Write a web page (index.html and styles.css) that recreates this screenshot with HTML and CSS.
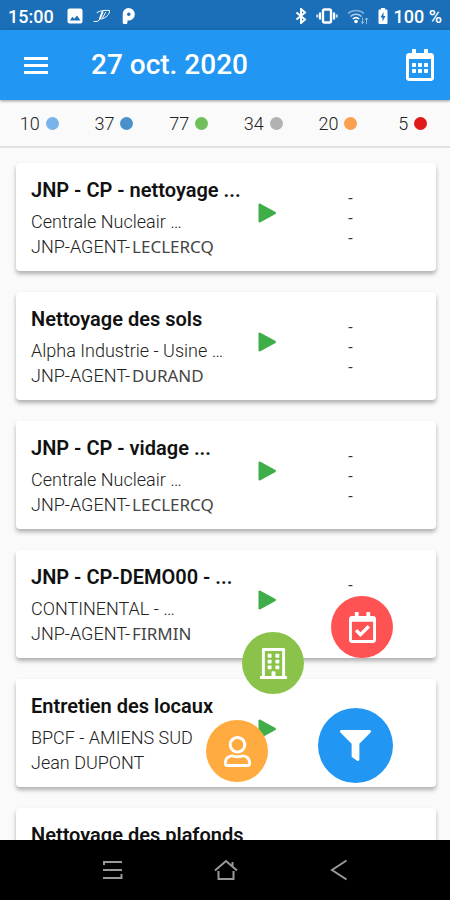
FILE: index.html
```html
<!DOCTYPE html>
<html lang="fr">
<head>
<meta charset="utf-8">
<meta name="viewport" content="width=device-width, initial-scale=1">
<title>27 oct. 2020</title>
<link rel="stylesheet" href="styles.css">
</head>
<body>
<svg class="defs" aria-hidden="true">
  <symbol id="play" viewBox="0 0 18 20"><path d="M1.5 1.5v17L17 10z" fill="#3fae49" stroke="#3fae49" stroke-width="2" stroke-linejoin="round"/></symbol>
</svg>

<div class="status">
  <span class="clock">15:00</span>
  <svg class="s-image" width="16" height="16" viewBox="0 0 16 16"><path fill-rule="evenodd" fill="#fff" d="M2.500 .5h11a2 2 0 0 1 2 2v11a2 2 0 0 1-2 2h-11a2 2 0 0 1-2-2v-11a2 2 0 0 1 2-2zM3 12.500h10.500L10 7.500l-2.700 3.300L5.300 8.800z"/></svg>
  <svg class="s-sign" width="18" height="14" viewBox="0 0 18 14" fill="none" stroke="#fff" stroke-linecap="round"><path stroke-width="1" d="M4 3.500C7 1.500 12 1 16.500 1.500 17 5 13 9 8.500 10M1 12.500c3 .5 5-.5 6-2.500"/><path stroke-width="2" d="M9.500 3 7 9.500"/><path stroke-width="1" d="M12.500 3.500 9.500 9"/></svg>
  <svg class="s-park" width="13" height="16" viewBox="0 0 13 16"><path fill-rule="evenodd" fill="#fff" d="M6.500 0a6.300 6.300 0 0 1 0 12.600H5.500V14a2.400 2.400 0 0 1-4.800 0V6.500A6 6 0 0 1 6.500 0zM6.800 4.500a1.800 1.800 0 1 0 0 3.600 1.800 1.800 0 0 0 0-3.600z"/></svg>
  <span class="spacer"></span>
  <svg class="s-bt" width="12" height="16" viewBox="0 0 12 16" fill="none" stroke="#fff" stroke-width="2"><path d="M1.500 4.500 10 11.500 6 15V1l4 3.500L1.500 11.500"/></svg>
  <svg class="s-vibe" width="22" height="16" viewBox="0 0 22 16" fill="none" stroke="#fff"><rect x="7" y="1.500" width="8" height="13" rx="1.500" stroke-width="2.400"/><path stroke-width="2.200" d="M4 4.500v7M18 4.500v7" /><path stroke-width="2" opacity=".8" d="M1.300 6.500v3M20.700 6.500v3"/></svg>
  <svg class="s-wifi" width="22" height="17" viewBox="0 0 22 17" fill="none" stroke="#fff" stroke-width="1.600"><path opacity=".45" d="M1 5.500a12 12 0 0 1 16 0"/><path opacity=".65" d="M3.500 8.500a8 8 0 0 1 11 0"/><path d="M5.800 11a4.800 4.800 0 0 1 6.400 0"/><circle cx="9" cy="13.500" r="1.800" fill="#fff" stroke="none"/><path opacity=".5" stroke-width="1" d="M15.500 9.500v6M13.800 13.500l1.700 2 1.700-2M19.500 16v-6M17.800 12l1.700-2 1.700 2"/></svg>
  <svg class="s-batt" width="10" height="16" viewBox="0 0 10 16"><path fill-rule="evenodd" fill="#fff" d="M3 0h4v1.500h1.500a1 1 0 0 1 1 1V15a1 1 0 0 1-1 1h-7a1 1 0 0 1-1-1V2.500a1 1 0 0 1 1-1H3zM5.500 4 2.500 9.500h2v4l3-5.500h-2z"/></svg>
  <span class="percent">100 %</span>
</div>

<header class="appbar">
  <button class="icon-btn" aria-label="Menu"><svg width="24" height="17" viewBox="0 0 24 17" fill="#fff"><rect y="0" width="24" height="3"/><rect y="7" width="24" height="3"/><rect y="14" width="24" height="3"/></svg></button>
  <h1>27 oct. 2020</h1>
  <button class="icon-btn" aria-label="Calendrier"><svg width="28" height="32" viewBox="0 0 448 512" fill="#fff"><path d="M148 288h-40c-6.600 0-12-5.400-12-12v-40c0-6.600 5.400-12 12-12h40c6.600 0 12 5.400 12 12v40c0 6.600-5.400 12-12 12zm108-12v-40c0-6.600-5.400-12-12-12h-40c-6.600 0-12 5.400-12 12v40c0 6.600 5.400 12 12 12h40c6.600 0 12-5.400 12-12zm96 0v-40c0-6.600-5.400-12-12-12h-40c-6.600 0-12 5.400-12 12v40c0 6.600 5.400 12 12 12h40c6.600 0 12-5.400 12-12zm-96 96v-40c0-6.600-5.400-12-12-12h-40c-6.600 0-12 5.400-12 12v40c0 6.600 5.400 12 12 12h40c6.600 0 12-5.400 12-12zm-96 0v-40c0-6.600-5.400-12-12-12h-40c-6.600 0-12 5.400-12 12v40c0 6.600 5.400 12 12 12h40c6.600 0 12-5.400 12-12zm192 0v-40c0-6.600-5.400-12-12-12h-40c-6.600 0-12 5.400-12 12v40c0 6.600 5.400 12 12 12h40c6.600 0 12-5.400 12-12zm96-260v352c0 26.500-21.500 48-48 48H48c-26.500 0-48-21.500-48-48V112c0-26.500 21.500-48 48-48h48V12c0-6.600 5.400-12 12-12h40c6.600 0 12 5.400 12 12v52h128V12c0-6.600 5.400-12 12-12h40c6.600 0 12 5.400 12 12v52h48c26.500 0 48 21.500 48 48zm-48 346V160H48v298c0 3.300 2.700 6 6 6h340c3.300 0 6-2.700 6-6z"/></svg></button>
</header>

<ul class="counts">
  <li>10 <i class="dot sky"></i></li>
  <li>37 <i class="dot blue"></i></li>
  <li>77 <i class="dot green"></i></li>
  <li>34 <i class="dot gray"></i></li>
  <li>20 <i class="dot orange"></i></li>
  <li>5 <i class="dot red"></i></li>
</ul>

<main>
  <div class="list">
    <article class="card">
      <div class="info"><h2>JNP - CP - nettoyage ...</h2><p>Centrale Nucleair …</p><p>JNP-AGENT-<span class="name">LECLERCQ</span></p></div>
      <svg class="play" width="18" height="20"><use href="#play"/></svg>
      <div class="times"><span>-</span><span>-</span><span>-</span></div>
    </article>
    <article class="card">
      <div class="info"><h2>Nettoyage des sols</h2><p>Alpha Industrie - Usine …</p><p>JNP-AGENT-<span class="name">DURAND</span></p></div>
      <svg class="play" width="18" height="20"><use href="#play"/></svg>
      <div class="times"><span>-</span><span>-</span><span>-</span></div>
    </article>
    <article class="card">
      <div class="info"><h2>JNP - CP - vidage ...</h2><p>Centrale Nucleair …</p><p>JNP-AGENT-<span class="name">LECLERCQ</span></p></div>
      <svg class="play" width="18" height="20"><use href="#play"/></svg>
      <div class="times"><span>-</span><span>-</span><span>-</span></div>
    </article>
    <article class="card">
      <div class="info"><h2>JNP - CP-DEMO00 - ...</h2><p>CONTINENTAL - …</p><p>JNP-AGENT-<span class="name">FIRMIN</span></p></div>
      <svg class="play" width="18" height="20"><use href="#play"/></svg>
      <div class="times"><span>-</span></div>
    </article>
    <article class="card">
      <div class="info"><h2>Entretien des locaux</h2><p>BPCF - AMIENS SUD</p><p>Jean DUPONT</p></div>
      <svg class="play" width="18" height="20"><use href="#play"/></svg>
    </article>
    <article class="card">
      <div class="info"><h2>Nettoyage des plafonds</h2></div>
    </article>
  </div>

  <button class="fab fab-date" aria-label="Filtrer par date"><svg width="27" height="31" viewBox="0 0 448 512" fill="#fff"><path d="M400 64h-48V12c0-6.627-5.373-12-12-12h-40c-6.627 0-12 5.373-12 12v52H160V12c0-6.627-5.373-12-12-12h-40c-6.627 0-12 5.373-12 12v52H48C21.490 64 0 85.490 0 112v352c0 26.510 21.490 48 48 48h352c26.510 0 48-21.490 48-48V112c0-26.510-21.490-48-48-48zm-6 400H54a6 6 0 0 1-6-6V160h352v298a6 6 0 0 1-6 6zm-52.849-200.650L198.842 404.519c-4.705 4.667-12.303 4.637-16.971-.068l-75.091-75.699c-4.667-4.705-4.637-12.303.068-16.971l22.719-22.536c4.705-4.667 12.303-4.637 16.970.069l44.104 44.461 111.072-110.181c4.705-4.667 12.303-4.637 16.971.068l22.536 22.718c4.667 4.705 4.636 12.303-.069 16.970z"/></svg></button>
  <button class="fab fab-site" aria-label="Filtrer par site"><svg width="27" height="31" viewBox="0 0 448 512" fill="#fff"><path fill-rule="evenodd" d="M56 0h336a24 24 0 0 1 24 24v440h20a12 12 0 0 1 12 12v36H0v-36a12 12 0 0 1 12-12h20V24A24 24 0 0 1 56 0zM80 48v415h112v-67a12 12 0 0 1 12-12h40a12 12 0 0 1 12 12v67h112V48z"/><rect x="128" y="96" width="64" height="64" rx="12"/><rect x="256" y="96" width="64" height="64" rx="12"/><rect x="128" y="192" width="64" height="64" rx="12"/><rect x="256" y="192" width="64" height="64" rx="12"/><rect x="128" y="288" width="64" height="64" rx="12"/><rect x="256" y="288" width="64" height="64" rx="12"/></svg></button>
  <button class="fab fab-agent" aria-label="Filtrer par agent"><svg width="27" height="31" viewBox="0 0 448 512" fill="#fff"><path d="M313.600 304c-28.700 0-42.500 16-89.600 16-47.100 0-60.800-16-89.600-16C60.200 304 0 364.200 0 438.400V464c0 26.500 21.500 48 48 48h352c26.500 0 48-21.500 48-48v-25.600c0-74.200-60.200-134.400-134.400-134.400zM400 464H48v-25.600c0-47.600 38.800-86.400 86.400-86.400 14.600 0 38.300 16 89.600 16 51.700 0 74.900-16 89.600-16 47.600 0 86.400 38.800 86.400 86.400V464zM224 288c79.500 0 144-64.500 144-144S303.500 0 224 0 80 64.500 80 144s64.500 144 144 144zm0-240c52.900 0 96 43.100 96 96s-43.100 96-96 96-96-43.100-96-96 43.100-96 96-96z"/></svg></button>
  <button class="fab fab-main" aria-label="Filtres"><svg width="31" height="31" viewBox="0 0 512 512" fill="#fff"><path d="M487.976 0H24.028C2.710 0-8.047 25.866 7.058 40.971L192 225.941V432c0 7.831 3.821 15.170 10.237 19.662l80 55.980C298.020 518.690 320 507.493 320 487.980V225.941l184.947-184.970C520.021 25.896 509.338 0 487.976 0z"/></svg></button>
</main>

<nav class="navbar">
  <button aria-label="Applications récentes"><svg width="20" height="20" viewBox="0 0 20 20" fill="none" stroke="#999" stroke-width="2"><path d="M1 5V2h18M0 10h19M0 18h18.500v-4"/></svg></button>
  <button aria-label="Accueil"><svg width="24" height="22" viewBox="0 0 24 22" fill="none" stroke="#999" stroke-width="2"><path d="M1 11.500 12 2l11 9.500M18.500 7V3M4.500 12v8h15v-8"/></svg></button>
  <button aria-label="Retour"><svg width="18" height="22" viewBox="0 0 18 22" fill="none" stroke="#999" stroke-width="2"><path d="M16.500 1.500 2 11l14.500 9.500"/></svg></button>
</nav>
</body>
</html>
```
FILE: styles.css
```css
* { box-sizing: border-box; }

body {
  margin: 0;
  height: 100vh;
  display: flex;
  flex-direction: column;
  overflow: hidden;
  background: #fafafa;
  color: #111;
  font-family: Roboto, "Liberation Sans", sans-serif;
}

h1, h2, p, ul { margin: 0; padding: 0; }

svg { display: block; flex: none; }

button {
  border: 0;
  padding: 0;
  background: none;
  display: flex;
  align-items: center;
  justify-content: center;
  cursor: pointer;
}

.defs { position: absolute; width: 0; height: 0; }

.status {
  flex: none;
  height: 30px;
  padding: 2px 8px 0;
  display: flex;
  align-items: center;
  background: #1a6fb8;
  color: #fff;
  font-size: 18px;
  font-weight: 500;
}

.spacer { flex: 1; }
.s-image { margin-left: 13px; }
.s-sign { margin-left: 10px; }
.s-park { margin-left: 11px; }
.s-vibe { margin-left: 9px; }
.s-wifi { margin-left: 9px; }
.s-batt { margin-left: 9px; }
.percent { margin-left: 6px; }

.appbar {
  flex: none;
  height: 70px;
  padding: 0 16px 0 24px;
  display: flex;
  align-items: center;
  background: #2196f3;
  color: #fff;
  box-shadow: 0 1px 3px rgba(0, 0, 0, .4);
  z-index: 1;
}

.appbar h1 {
  flex: 1;
  margin-left: 43px;
  font-size: 28px;
  line-height: 34px;
  font-weight: 500;
}

.counts {
  flex: none;
  height: 48px;
  padding-left: 2px;
  display: grid;
  grid-template-columns: repeat(6, 1fr);
  align-items: center;
  list-style: none;
  border-bottom: 2px solid #e2e2e2;
  font-size: 18px;
  font-weight: 300;
  color: #222;
}

.counts li {
  display: flex;
  align-items: center;
  justify-content: center;
  gap: 6px;
}

.dot { width: 13px; height: 13px; border-radius: 50%; }
.sky { background: #7ab3ea; }
.blue { background: #4a90cc; }
.green { background: #70bf5b; }
.gray { background: #b2b2b2; }
.orange { background: #f9a150; }
.red { background: #e01a1a; }

main {
  position: relative;
  flex: 1;
  min-height: 0;
  overflow: hidden;
}

.list {
  padding: 15px 14px 0 16px;
  display: flex;
  flex-direction: column;
  gap: 21px;
}

.card {
  min-height: 108px;
  padding: 15px 15px 11px;
  display: grid;
  grid-template-columns: 1fr 18px 141px;
  column-gap: 4px;
  align-items: center;
  background: #fff;
  border-radius: 4px;
  box-shadow: 0 3px 4px rgba(0, 0, 0, .3);
}

.info { align-self: start; white-space: nowrap; }

.info h2 {
  margin-bottom: 7px;
  font-size: 20px;
  line-height: 24px;
  font-weight: 600;
}

.info p {
  font-size: 18px;
  line-height: 25px;
  font-weight: 300;
  color: #222;
}

.name {
  margin-left: 2px;
  font-family: "Noto Sans", sans-serif;
  font-size: 17px;
  font-weight: 400;
  color: #444;
}

.play { margin-bottom: 12px; }

.times {
  height: 60px;
  display: flex;
  flex-direction: column;
  align-items: center;
  font-size: 16px;
  line-height: 20px;
  color: #333;
}

.fab {
  position: absolute;
  width: 62px;
  height: 62px;
  border-radius: 50%;
}

.fab-date { right: 57px; bottom: 182px; background: #ff5252; }
.fab-site { right: 146px; bottom: 146px; background: #8bc34a; }
.fab-agent { right: 182px; bottom: 58px; background: #ffab40; }
.fab-main { right: 57px; bottom: 57px; width: 75px; height: 75px; background: #2196f3; }

.navbar {
  flex: none;
  height: 60px;
  padding: 0 55px 0 57px;
  display: grid;
  grid-template-columns: repeat(3, 1fr);
  background: #000;
  z-index: 1;
}
```
